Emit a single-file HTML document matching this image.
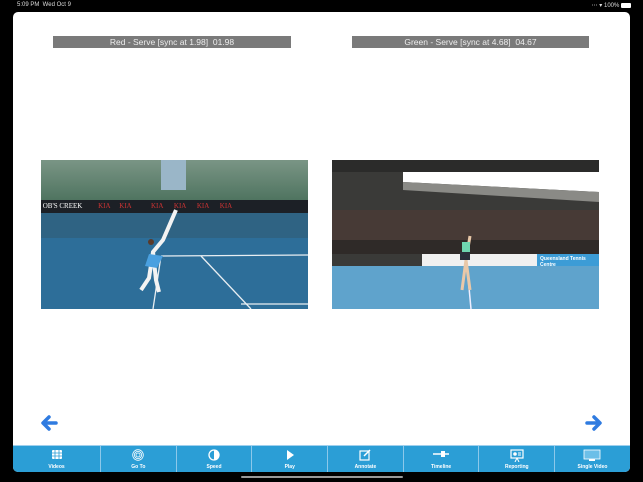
<!DOCTYPE html>
<html><head><style>
*{margin:0;padding:0;box-sizing:border-box}
body{width:643px;height:482px;background:#000;position:relative;overflow:hidden;font-family:"Liberation Sans",sans-serif}
.st{position:absolute;top:2px;font-size:6px;color:#ddd}
.panel{position:absolute;left:13px;top:12px;width:617px;height:460px;background:#fff;border-radius:5px;overflow:hidden}
.lbl{position:absolute;height:12px;background:#7a7a7a;color:#eee;font-size:8.5px;line-height:12px;text-align:center}
.vid{position:absolute;overflow:hidden}
.tb{position:absolute;left:0;top:433px;width:617px;height:27px;background:#2b9ed6;display:flex;border-top:1px solid #9fd0ee}
.tb div{flex:0 0 75.7px;border-left:1px solid #8cc8ea;color:#fff;font-size:5px;font-weight:bold;text-align:center;position:relative}
.tb div:first-child{border-left:none;flex:0 0 87px}
.tb span{position:absolute;bottom:2px;left:0;right:0}
.tb svg{position:absolute;top:3px;left:50%;transform:translateX(-50%)}
</style></head><body>
<div class="st" style="left:17px">5:09 PM&nbsp;&nbsp;Wed Oct 9</div>
<div class="st" style="right:12px">&#8943; &#9662; 100% <span style="display:inline-block;width:10px;height:5px;background:#fff;border-radius:1px;vertical-align:middle"></span></div>
<div class="panel">
<div class="lbl" style="left:40px;top:24px;width:238px">Red - Serve [sync at 1.98]&nbsp;&nbsp;01.98</div>
<div class="lbl" style="left:339px;top:24px;width:237px">Green - Serve [sync at 4.68]&nbsp;&nbsp;04.67</div>

<div class="vid" style="left:28px;top:148px;width:267px;height:149px">
<div style="position:absolute;left:0;top:0;width:267px;height:40px;background:linear-gradient(#7a9585,#4f7460)"></div>
<div style="position:absolute;left:120px;top:0;width:25px;height:30px;background:#9ab6c8"></div>
<div style="position:absolute;left:0;top:40px;width:267px;height:13px;background:#1c2026;color:#fff;font-size:7px;line-height:13px;font-family:'Liberation Serif',serif">&nbsp;OB'S CREEK <span style="color:#c33;margin-left:14px">KIA&nbsp;&nbsp;&nbsp;&nbsp;&nbsp;KIA&nbsp;&nbsp;&nbsp;&nbsp;&nbsp;&nbsp;&nbsp;&nbsp;&nbsp;&nbsp;&nbsp;KIA&nbsp;&nbsp;&nbsp;&nbsp;&nbsp;&nbsp;KIA&nbsp;&nbsp;&nbsp;&nbsp;&nbsp;&nbsp;KIA&nbsp;&nbsp;&nbsp;&nbsp;&nbsp;&nbsp;KIA</span></div>
<div style="position:absolute;left:0;top:53px;width:267px;height:25px;background:#2f6383"></div>
<div style="position:absolute;left:0;top:78px;width:267px;height:71px;background:#2d6e99"></div>
<svg style="position:absolute;left:0;top:0" width="267" height="149"><g stroke="#e8eef2" stroke-width="1.3"><line x1="120" y1="96" x2="267" y2="95"/><line x1="120" y1="96" x2="112" y2="149"/><line x1="160" y1="96" x2="210" y2="149"/><line x1="200" y1="144" x2="267" y2="144"/></g>
<path d="M135 50 L122 80 L112 92 L108 118 L100 130 M112 92 L115 120 L118 132" stroke="#f3f3f3" stroke-width="4" fill="none"/><path d="M108 94 L122 96 L116 108 L104 106Z" fill="#4aa0e0"/><circle cx="110" cy="82" r="3" fill="#5a3a2a"/></svg>
</div>

<div class="vid" style="left:319px;top:148px;width:267px;height:149px;background:#3a3a38">
<div style="position:absolute;left:0;top:0;width:267px;height:12px;background:#2b2b2a"></div>
<svg style="position:absolute;left:0;top:0" width="267" height="149"><path d="M71 12 L267 12 L267 32 L71 22Z" fill="#fff"/><path d="M71 22 L267 32 L267 42 L71 30Z" fill="#8a8a86"/><rect x="0" y="50" width="267" height="30" fill="#473a36"/><rect x="0" y="80" width="267" height="14" fill="#2f2a28"/><rect x="90" y="94" width="177" height="12" fill="#f0f0f0"/><rect x="205" y="94" width="62" height="12" fill="#3c9cd6"/><rect x="0" y="106" width="267" height="43" fill="#5fa3cc"/><line x1="135" y1="106" x2="139" y2="149" stroke="#eef" stroke-width="1.5"/>
<path d="M138 76 L134 100 L130 130 M134 100 L138 130" stroke="#e9c8a8" stroke-width="3" fill="none"/><rect x="128" y="92" width="10" height="8" fill="#2a2f3a"/><rect x="130" y="82" width="8" height="10" fill="#6fd6b0"/></svg>
<div style="position:absolute;left:208px;top:96px;font-size:5px;color:#fff;font-weight:bold">Queensland Tennis Centre</div>
</div>

<svg style="position:absolute;left:27px;top:403px" width="18" height="16"><path d="M16 8 H4 M9 2 L3 8 L9 14" stroke="#2f7be0" stroke-width="3.5" fill="none" stroke-linecap="round" stroke-linejoin="round"/></svg>
<svg style="position:absolute;left:572px;top:403px" width="18" height="16"><path d="M2 8 H14 M9 2 L15 8 L9 14" stroke="#2f7be0" stroke-width="3.5" fill="none" stroke-linecap="round" stroke-linejoin="round"/></svg>

<div class="tb">
<div><svg width="12" height="11"><rect x="1" y="1" width="10" height="9" rx="1" fill="#fff"/><path d="M1 4H11M1 7H11M4 1V10M8 1V10" stroke="#2b9ed6" stroke-width=".8"/></svg><span>Videos</span></div>
<div><svg width="12" height="12"><g fill="none" stroke="#fff" stroke-width=".8"><circle cx="6" cy="6" r="5.3"/><circle cx="6" cy="6" r="3.6"/><circle cx="6" cy="6" r="2"/></g></svg><span>Go To</span></div>
<div><svg width="12" height="12"><circle cx="6" cy="6" r="5" fill="none" stroke="#fff" stroke-width="1.3"/><path d="M6 1A5 5 0 0 1 6 11Z" fill="#fff"/></svg><span>Speed</span></div>
<div><svg width="12" height="12"><path d="M3 1L10 6L3 11Z" fill="#fff"/></svg><span>Play</span></div>
<div><svg width="12" height="12"><rect x="1" y="2" width="9" height="9" fill="none" stroke="#fff" stroke-width="1.2"/><path d="M5 7L11 1" stroke="#fff" stroke-width="1.5"/></svg><span>Annotate</span></div>
<div><svg width="16" height="10"><path d="M0 5H16" stroke="#fff" stroke-width="1.5"/><rect x="8" y="2" width="4" height="6" fill="#fff"/></svg><span>Timeline</span></div>
<div><svg width="14" height="13"><rect x="1" y="1" width="12" height="8" fill="none" stroke="#fff" stroke-width="1.2"/><circle cx="5" cy="5" r="1.8" fill="#fff"/><path d="M8 4H11M8 6H11M7 9L5 13M7 9L9 13" stroke="#fff"/></svg><span>Reporting</span></div>
<div><svg width="18" height="12"><rect x="1" y="1" width="16" height="9" fill="#6cbfe8" stroke="#fff" stroke-width=".8"/><rect x="6" y="10" width="6" height="2" fill="#fff"/></svg><span>Single Video</span></div>
</div>
</div>
<div style="position:absolute;left:241px;top:476px;width:162px;height:2px;background:#999;border-radius:1px"></div>
</body></html>
